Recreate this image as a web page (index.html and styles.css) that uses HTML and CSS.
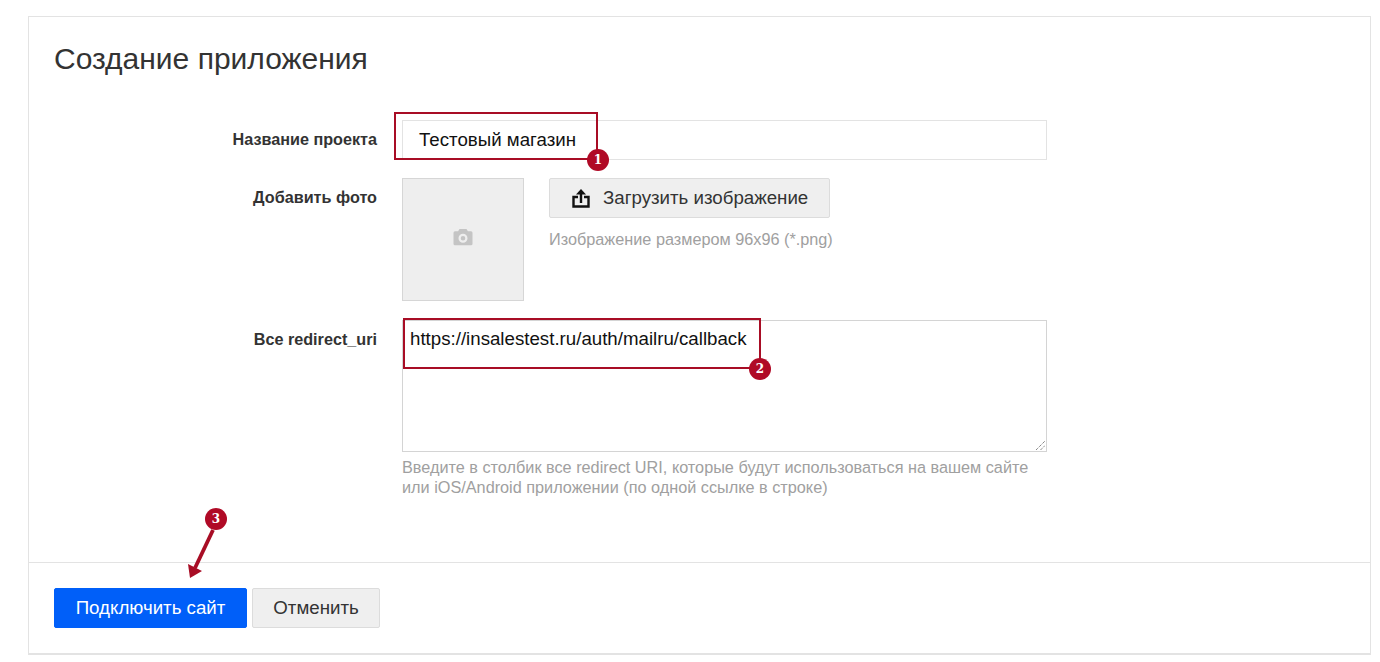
FILE: index.html
```html
<!DOCTYPE html>
<html lang="ru">
<head>
<meta charset="utf-8">
<title>Создание приложения</title>
<link rel="stylesheet" href="styles.css">
</head>
<body>
<main class="card">
  <div class="card-body">
    <h1 class="title">Создание приложения</h1>
    <form class="form">
      <div class="row row-name">
        <label class="label">Название проекта</label>
        <div class="field"><div class="input">Тестовый магазин</div></div>
      </div>
      <div class="row row-photo">
        <label class="label label-photo">Добавить фото</label>
        <div class="field photo-field">
          <div class="photo">
            <svg class="camera" width="20" height="18" viewBox="0 0 20 18"><path fill="#c4c4c4" fill-rule="evenodd" d="M6.500 1h7l1.400 2.200H18a1.500 1.500 0 0 1 1.500 1.500v11a1.500 1.500 0 0 1-1.500 1.500H2A1.500 1.500 0 0 1 .5 15.700v-11A1.500 1.500 0 0 1 2 3.200h3.100zM10 5.700a4.500 4.500 0 1 0 0 9 4.500 4.500 0 0 0 0-9zm0 2.200a2.300 2.300 0 1 1 0 4.600 2.300 2.300 0 0 1 0-4.600z"/></svg>
          </div>
          <div class="upload">
            <button type="button" class="btn-upload">
              <svg width="18" height="19" viewBox="0 0 18 19"><path fill="none" stroke="#111" stroke-width="2.400" d="M6 8H1.500v9.500h15V8H12M9 14V3"/><path fill="#111" d="M9 0l5 5.500H4z"/></svg>
              <span>Загрузить изображение</span>
            </button>
            <p class="upload-hint">Изображение размером 96x96 (*.png)</p>
          </div>
        </div>
      </div>
      <div class="row row-uri">
        <label class="label label-uri">Все redirect_uri</label>
        <div class="field">
          <div class="textarea">https://insalestest.ru/auth/mailru/callback
            <svg class="grip" width="11" height="11" viewBox="0 0 11 11"><path stroke="#555" stroke-dasharray="1 1" fill="none" d="M1 10l9-9M5.500 10L10 5.500"/></svg>
          </div>
          <p class="hint">Введите в столбик все redirect URI, которые будут использоваться на вашем сайте<br>или iOS/Android приложении (по одной ссылке в строке)</p>
        </div>
      </div>
    </form>
  </div>
  <footer class="footer">
    <button type="button" class="btn btn-primary">Подключить сайт</button>
    <button type="button" class="btn btn-secondary">Отменить</button>
  </footer>

  <div class="mark mark-1"></div>
  <div class="badge badge-1">1</div>
  <div class="mark mark-2"></div>
  <div class="badge badge-2">2</div>
  <div class="badge badge-3">3</div>
  <svg class="arrow" width="34" height="54" viewBox="0 0 34 54"><path stroke="#a80d25" stroke-width="3.800" d="M25 4L7 42"/><path fill="#a80d25" d="M2 52L0 38 14 45z"/></svg>
</main>
</body>
</html>
```

FILE: styles.css
```css
* { box-sizing: border-box; }
html, body { height: 100%; }
body {
  margin: 0;
  padding: 16px 9px 7px 28px;
  background: #fff;
  font-family: "Liberation Sans", Arial, sans-serif;
  color: #333;
  overflow: hidden;
}
.card {
  position: relative;
  height: 639px;
  border: 1px solid #e3e3e3;
  border-bottom-width: 2px;
  background: #fff;
  display: flex;
  flex-direction: column;
}
.card-body { flex: 1; padding: 24px 25px 0; }
.title {
  margin: 0;
  font-size: 30px;
  line-height: 36px;
  font-weight: 400;
  color: #333;
}
.form { margin-top: 43px; }
.row { display: flex; }
.row-name { height: 40px; }
.row-photo { margin-top: 18px; height: 123px; }
.row-uri { margin-top: 19px; }
.label {
  width: 323px;
  flex: none;
  text-align: right;
  font-size: 16.200px;
  font-weight: 700;
  line-height: 20px;
  color: #333;
  padding-top: 9px;
}
.field { margin-left: 25px; width: 645px; }
.input {
  height: 40px;
  border: 1px solid #e3e3e3;
  padding: 0 16px;
  font-size: 18.700px;
  line-height: 37px;
  color: #111;
}
.photo-field { display: flex; }
.photo {
  width: 122px;
  height: 123px;
  background: #eee;
  border: 1px solid #d6d6d6;
  display: flex;
  align-items: center;
  justify-content: center;
  padding-bottom: 5px;
}
.upload { margin-left: 25px; }
.btn-upload {
  width: 281px;
  height: 40px;
  display: flex;
  align-items: center;
  padding: 0 0 0 22px;
  gap: 13px;
  background: #efefef;
  border: 1px solid #dcdcdc;
  border-radius: 2px;
  font: 18.700px "Liberation Sans", Arial, sans-serif;
  color: #333;
}
.upload-hint {
  margin: 11px 0 0;
  font-size: 16.250px;
  line-height: 20px;
  color: #a0a0a0;
}
.textarea {
  position: relative;
  height: 132px;
  border: 1px solid #d4d4d4;
  padding: 8px 7px;
  font-size: 18.700px;
  line-height: 20px;
  color: #111;
}
.grip { position: absolute; right: 0; bottom: 0; }
.hint {
  margin: 5px 0 0;
  font-size: 16.250px;
  line-height: 20px;
  color: #a0a0a0;
  white-space: nowrap;
}
.footer {
  height: 91px;
  border-top: 1px solid #e3e3e3;
  padding: 25px 25px 0;
  display: flex;
  gap: 5px;
  align-items: flex-start;
}
.btn {
  height: 40px;
  border-radius: 2px;
  font: 18.700px "Liberation Sans", Arial, sans-serif;
  padding: 0;
}
.btn-primary {
  width: 193px;
  background: #005ff9;
  border: 1px solid #005ff9;
  color: #fff;
}
.btn-secondary {
  width: 128px;
  background: #efefef;
  border: 1px solid #dcdcdc;
  color: #333;
}
.mark { position: absolute; border: 2px solid #a80d25; }
.mark-1 { left: 365px; top: 95px; width: 204px; height: 48px; }
.mark-2 { left: 374px; top: 301px; width: 358px; height: 51px; }
.badge {
  position: absolute;
  width: 22px;
  height: 22px;
  border-radius: 50%;
  background: #b00a26;
  color: #fff;
  font: 700 12px/22px "DejaVu Serif", serif;
  text-align: center;
}
.badge-1 { left: 558px; top: 132px; }
.badge-2 { left: 720px; top: 341px; }
.badge-3 { left: 176px; top: 491px; }
.arrow { position: absolute; left: 159px; top: 509px; }
```
